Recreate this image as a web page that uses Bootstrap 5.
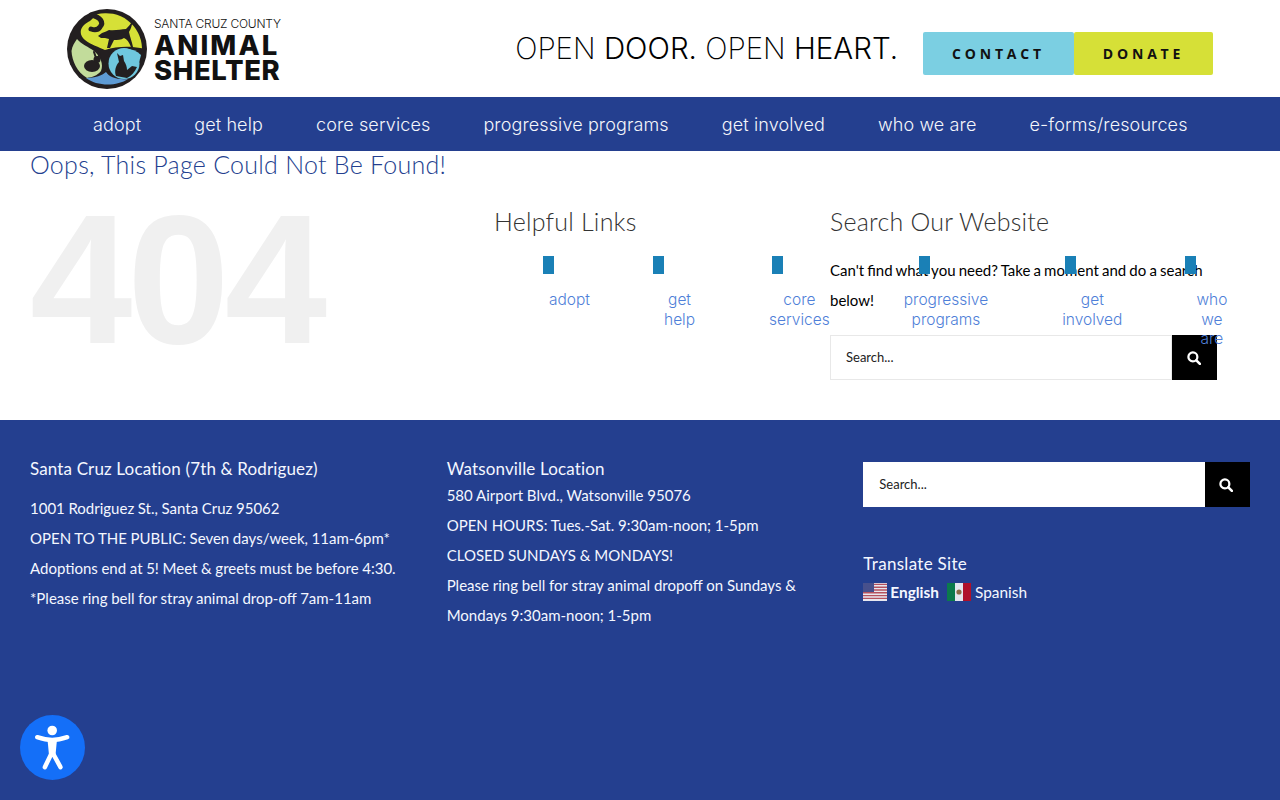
<!DOCTYPE html>
<html lang="en">
<head>
<meta charset="UTF-8">
<title>Santa Cruz County Animal Shelter</title>
<link href="https://cdn.jsdelivr.net/npm/bootstrap@5.3.0/dist/css/bootstrap.min.css" rel="stylesheet">
<style>
body { font-family: "Lato", "Liberation Sans", sans-serif; font-size: 15px; color: #000; background: #fff; }
a { text-decoration: none; }
.top-head { height: 97px; padding: 9px 67px 0 67px; }
.logo-words { margin-left: 7px; padding-top: 7px; color: #111; font-family: "Inter", sans-serif; white-space: nowrap; }
.logo-county { font-size: 12px; font-weight: 300; line-height: 15px; letter-spacing: -.22px; }
.logo-big { font-size: 27.5px; font-weight: 800; line-height: 25px; }
.logo-animal { letter-spacing: 2.1px; padding-top: 2px; }
.logo-shelter { letter-spacing: .6px; }
.head-right { margin-top: 23px; height: 43px; }
.tagline { font-family: "Inter", sans-serif; font-size: 29.5px; line-height: 33px; font-weight: 200; color: #000; margin: 0 25px 10px 0; white-space: nowrap; }
.tagline b { font-weight: 300; }
.head-btn { height: 43px; font-family: "Open Sans", sans-serif; font-weight: 700; font-size: 14px; letter-spacing: 3.8px; color: #111; border-radius: 2px; display: flex; align-items: center; justify-content: center; }
.btn-contact { width: 151px; background: #7bcfe2; }
.btn-donate { width: 139px; background: #d6e037; }
.main-nav { background: #243f8f; height: 54px; padding-left: 93px; gap: 53px; }
.main-nav a { color: #f4f6fb; font-family: "Inter", sans-serif; font-size: 18px; font-weight: 300; letter-spacing: .12px; }
.page-area { padding: 0 30px; height: 269px; }
.oops { font-family: "Lato", sans-serif; font-weight: 300; font-size: 25px; line-height: 26px; letter-spacing: .26px; color: #243f8f; margin: 0; }
.big-404 { width: 464px; font-family: "Liberation Sans", sans-serif; font-weight: 700; font-size: 184px; line-height: 132px; color: #f0f0f0; margin-top: 36px; letter-spacing: -5px; }
.col-links { width: 336px; flex: none; }
.col-search { width: 387px; flex: none; }
.sub-title { font-family: "Lato", sans-serif; font-weight: 300; font-size: 25px; line-height: 30px; letter-spacing: .22px; color: #333; margin: 29px 0 0; }
.help-list { position: relative; z-index: 2; list-style: none; margin: 20px 0 0 55px; padding: 0; gap: 74px; }
.help-list li { width: min-content; text-align: center; font-family: "Inter", sans-serif; font-size: 15.5px; line-height: 19.6px; }
.help-list a { color: #4f7fd8; font-weight: 350; display: block; }
.help-mark { display: block; width: 11px; height: 18px; background: #1a80b6; margin: 0 0 16px calc(50% - 27px); }
.search-copy { line-height: 30px; margin: 19px 0 20px; word-spacing: -.7px; }
.search-box { display: flex; height: 45px; }
.search-field { flex: 1; display: flex; align-items: center; padding-left: 15px; font-size: 13px; color: #222; background: #fff; border: 1px solid #e8e8e8; }
.search-go { width: 45px; background: #000; display: flex; align-items: center; justify-content: center; }
.search-glyph { margin: 0 2px 0 0; }
.site-foot { background: #243f8f; color: #f4f7ff; height: 380px; padding: 0 30px; gap: 30px; }
.foot-col { width: 386.67px; flex: none; }
.foot-title { font-family: "Lato", sans-serif; font-size: 17px; font-weight: 400; line-height: 20px; letter-spacing: .14px; margin: 39px 0 0; }
.foot-lines { line-height: 30px; margin: 14px 0 0; word-spacing: -.2px; }
.foot-lines.tight { margin-top: 1px; word-spacing: 0; }
.foot-search { margin-top: 42px; }
.foot-search .search-field { border: 0; padding-left: 16px; }
.trans-title { font-size: 17px; line-height: 20px; letter-spacing: .3px; margin: 47px 0 0; }
.flag-row { margin-top: 8px; gap: 8px; line-height: 20px; font-size: 15.4px; }
.flag-row span { display: flex; align-items: center; gap: 3px; }
.flag-row .flag-name { margin-left: 1px; }
.access-btn { position: fixed; left: 20px; top: 715px; width: 65px; height: 65px; border-radius: 50%; background: #146ff8; display: flex; align-items: center; justify-content: center; }
</style>
</head>
<body>
<header class="top-head d-flex align-items-start">
  <svg width="80" height="80" viewBox="0 0 80 80" aria-label="logo">
    <circle cx="40" cy="40" r="40" fill="#231f20"/>
    <path d="M30 5.300A36 36 0 0 1 75 39.300C64 37 50 37 38 41 32 38 24 36 18 31 13 27 12 21 17 16 19 14 21 13 23 12z" fill="#d6e037"/>
    <path d="M24 6C34 8 37 14 33 18 31 21 27 21 24 20" fill="none" stroke="#231f20" stroke-width="5" stroke-linecap="round"/>
    <path d="M10 30C14 35 22 38 27 42 33 47 37 55 34 62 30 67 25 68 20 69 10 63 5 52 4.500 42 5 37 8 33 10 30z" fill="#c2dc9b"/>
    <circle cx="57" cy="54.500" r="15.500" fill="#6fc7de"/>
    <path d="M56 40C62 39 69 41 74 46 73 50 72 54 70 58z" fill="#6fc7de"/>
    <path d="M19 69C28 69 36 66 39 63 42 68 50 71 61 70 50 77.500 30 77.500 19 69z" fill="#5e9bd4"/>
    <path d="M31 27 35 24 39 22.500 42 21C48 22 54 20 59 20 61 18 64 15 66 11 65 16 64 20 62 23 63 28 65 33 66 38L64 38C62 33 60 30 57 29 54 31 50 31 47 31L43 39 40 39 42 30 38 29 34 29z" fill="#231f20"/>
    <ellipse cx="25" cy="57" rx="8" ry="6" fill="#231f20"/>
    <circle cx="30" cy="50.500" r="3.500" fill="#231f20"/>
    <path d="M29 49 27 43M31 49 33 44" stroke="#231f20" stroke-width="2" stroke-linecap="round"/>
    <path d="M49 67C47 62 49 56 52 53L50 44 53 47 56 46 57 52C59 55 60 58 60 61L65 57 70 58C68 63 64 67 60 69z" fill="#231f20"/>
  </svg>
  <div class="logo-words">
    <div class="logo-county">SANTA CRUZ COUNTY</div>
    <div class="logo-big logo-animal">ANIMAL</div>
    <div class="logo-big logo-shelter">SHELTER</div>
  </div>
  <div class="d-flex align-items-center ms-auto head-right">
    <div class="tagline">OPEN <b>DOOR.</b> OPEN <b>HEART.</b></div>
    <a class="head-btn btn-contact" href="#">CONTACT</a>
    <a class="head-btn btn-donate" href="#">DONATE</a>
  </div>
</header>
<nav class="main-nav d-flex align-items-center">
  <a href="#">adopt</a><a href="#">get help</a><a href="#">core services</a><a href="#">progressive programs</a><a href="#">get involved</a><a href="#">who we are</a><a href="#">e-forms/resources</a>
</nav>
<main class="page-area">
  <h1 class="oops">Oops, This Page Could Not Be Found!</h1>
  <div class="d-flex">
    <div class="big-404">404</div>
    <div class="col-links">
      <h2 class="sub-title">Helpful Links</h2>
      <ul class="help-list d-flex">
        <li><a href="#"><i class="help-mark"></i>adopt</a></li>
        <li><a href="#"><i class="help-mark"></i>get help</a></li>
        <li><a href="#"><i class="help-mark"></i>core services</a></li>
        <li><a href="#"><i class="help-mark"></i>progressive programs</a></li>
        <li><a href="#"><i class="help-mark"></i>get involved</a></li>
        <li><a href="#"><i class="help-mark"></i>who we are</a></li>
      </ul>
    </div>
    <div class="col-search">
      <h2 class="sub-title">Search Our Website</h2>
      <p class="search-copy">Can't find what you need? Take a moment and do a search below!</p>
      <div class="search-box">
        <div class="search-field">Search...</div>
        <div class="search-go"><svg class="search-glyph" width="14" height="14" viewBox="0 0 15 15"><circle cx="6.300" cy="6.300" r="4.800" fill="none" stroke="#fff" stroke-width="2.400"/><path d="M10 10l3.800 3.800" stroke="#fff" stroke-width="2.800" stroke-linecap="round"/></svg></div>
      </div>
    </div>
  </div>
</main>
<footer class="site-foot d-flex">
  <div class="foot-col">
    <h3 class="foot-title">Santa Cruz Location (7th &amp; Rodriguez)</h3>
    <div class="foot-lines">1001 Rodriguez St., Santa Cruz 95062<br>OPEN TO THE PUBLIC: Seven days/week, 11am-6pm*<br>Adoptions end at 5! Meet &amp; greets must be before 4:30.<br>*Please ring bell for stray animal drop-off 7am-11am</div>
  </div>
  <div class="foot-col">
    <h3 class="foot-title">Watsonville Location</h3>
    <div class="foot-lines tight">580 Airport Blvd., Watsonville 95076<br>OPEN HOURS: Tues.-Sat. 9:30am-noon; 1-5pm<br>CLOSED SUNDAYS &amp; MONDAYS!<br>Please ring bell for stray animal dropoff on Sundays &amp; Mondays 9:30am-noon; 1-5pm</div>
  </div>
  <div class="foot-col">
    <div class="search-box foot-search">
      <div class="search-field">Search...</div>
      <div class="search-go"><svg class="search-glyph" width="14" height="14" viewBox="0 0 15 15"><circle cx="6.300" cy="6.300" r="4.800" fill="none" stroke="#fff" stroke-width="2.400"/><path d="M10 10l3.800 3.800" stroke="#fff" stroke-width="2.800" stroke-linecap="round"/></svg></div>
    </div>
    <div class="trans-title">Translate Site</div>
    <div class="flag-row d-flex">
      <span class="fw-bold"><svg width="24" height="18" viewBox="0 0 24 18"><rect width="24" height="18" fill="#e8e8f0"/><path d="M0 1.400h24M0 4.200h24M0 7h24M0 9.800h24M0 12.600h24M0 15.400h24" stroke="#b5525f" stroke-width="1.400"/><rect width="11" height="9" fill="#47508c"/></svg>English</span>
      <span><svg width="24" height="18" viewBox="0 0 24 18"><rect width="8" height="18" fill="#0b7a4c"/><rect x="8" width="8" height="18" fill="#e4e6ee"/><rect x="16" width="8" height="18" fill="#b0102a"/><circle cx="12" cy="9" r="2.600" fill="#8a6a45"/></svg><i class="flag-name fst-normal">Spanish</i></span>
    </div>
  </div>
</footer>
<a class="access-btn" href="#" aria-label="Accessibility"><svg width="40" height="46" viewBox="0 0 40 46"><circle cx="19.200" cy="5.500" r="4.800" fill="#fff"/><path d="M4.200 12.200C9 13.800 14 15 19.200 15S29.400 13.800 34.200 12.200M19.200 27 11.800 42.200M19.200 27 27.500 42.200" fill="none" stroke="#fff" stroke-width="4.500" stroke-linecap="round"/><path d="M14.500 14.500H24L22.500 30H16z" fill="#fff"/></svg></a>
<script src="https://cdn.jsdelivr.net/npm/bootstrap@5.3.0/dist/js/bootstrap.bundle.min.js"></script>
</body>
</html>
